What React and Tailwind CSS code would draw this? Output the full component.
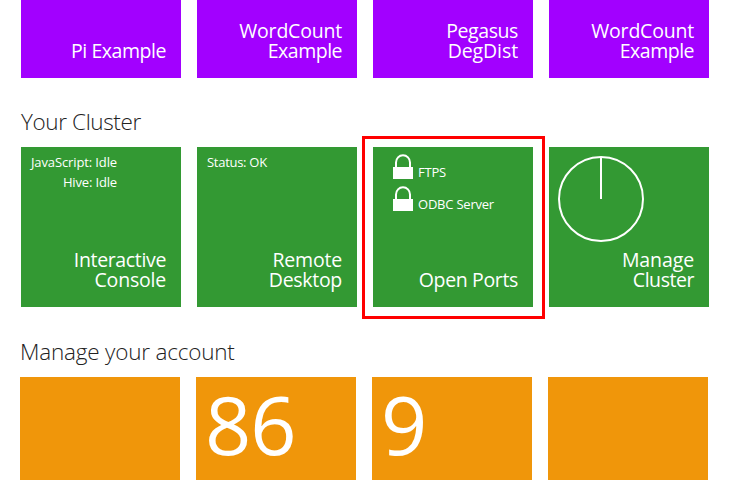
const titleFont = "font-['Open_Sans','Noto_Sans',sans-serif]";

function Label({ lines }) {
  return (
    <div className="flex flex-col items-end text-[19.5px] leading-5">
      {lines.map(([text, tracking]) => (
        <span key={text} className={tracking}>{text}</span>
      ))}
    </div>
  );
}

function Tile({ color, height, lines, children }) {
  return (
    <div className={`flex w-40 shrink-0 flex-col justify-between text-white ${color} ${height}`}>
      <div>{children}</div>
      {lines && (
        <div className="pr-[15px] pb-[17px]">
          <Label lines={lines} />
        </div>
      )}
    </div>
  );
}

function Port({ name, tracking }) {
  return (
    <div className="flex h-8 gap-[5px] text-[13px] leading-5">
      <svg width="20" height="26" viewBox="0 0 20 26" fill="none">
        <path d="M3 14V8.5a7 7.2 0 0 1 14 0V14" stroke="white" strokeWidth="2" />
        <path d="M0 13h20v12H0z" fill="white" />
      </svg>
      <span className={`pt-2 ${tracking}`}>{name}</span>
    </div>
  );
}

const purple = "bg-[#a200ff]";
const green = "bg-[#339933]";
const orange = "bg-[#f0960a]";
const wordCount = [["WordCount", "tracking-[-0.2px]"], ["Example", "tracking-[-0.5px]"]];

export default function App() {
  return (
    <div className={`relative h-[480px] w-[729px] overflow-hidden bg-white ${titleFont}`}>
      <section className="flex gap-4 pl-[21px]">
        <Tile color={purple} height="h-[78px]" lines={[["Pi Example", "tracking-[-0.45px]"]]} />
        <Tile color={purple} height="h-[78px]" lines={wordCount} />
        <Tile color={purple} height="h-[78px]" lines={[["Pegasus", "tracking-[-0.4px]"], ["DegDist", "tracking-[-0.1px]"]]} />
        <Tile color={purple} height="h-[78px]" lines={wordCount} />
      </section>

      <section className="pl-[21px]">
        <h2 className="h-[69px] pt-[29px] text-[22.5px] leading-[30px] font-light tracking-[-0.38px] text-[#222]">Your Cluster</h2>
        <div className="flex gap-4">
          <Tile color={green} height="h-40" lines={[["Interactive", "tracking-[-0.35px]"], ["Console", "tracking-[-0.2px]"]]}>
            <div className="flex w-24 flex-col items-end pt-[5px] text-[13px] leading-5">
              <span className="tracking-[-0.12px]">JavaScript: Idle</span>
              <span className="tracking-[-0.15px]">Hive: Idle</span>
            </div>
          </Tile>
          <Tile color={green} height="h-40" lines={[["Remote", "tracking-[-0.2px]"], ["Desktop", "tracking-[-0.3px]"]]}>
            <p className="pt-[5px] pl-[10px] text-[13px] leading-5 tracking-[-0.28px]">Status: OK</p>
          </Tile>
          <Tile color={green} height="h-40" lines={[["Open Ports", "tracking-[-0.35px]"]]}>
            <div className="pt-[7px] pl-5">
              <Port name="FTPS" tracking="tracking-[-0.2px]" />
              <Port name="ODBC Server" tracking="tracking-[-0.22px]" />
            </div>
          </Tile>
          <Tile color={green} height="h-40" lines={[["Manage", "tracking-[-0.1px]"], ["Cluster", "tracking-[-0.45px]"]]}>
            <svg className="mt-[9px] ml-[9px]" width="86" height="86" viewBox="0 0 86 86" fill="none" stroke="white" strokeWidth="2">
              <circle cx="43" cy="43" r="42" />
              <path d="M43 1v42" />
            </svg>
          </Tile>
        </div>
      </section>

      <section className="pl-5">
        <h2 className="h-[70px] pt-[30px] text-[22.5px] leading-[30px] font-light tracking-[-0.2px] text-[#222]">Manage your account</h2>
        <div className="flex gap-4">
          <Tile color={orange} height="h-[103px]" />
          <Tile color={orange} height="h-[103px]">
            <p className="pt-[2px] pl-[9px] text-[81px] leading-[90px] tracking-[-1px]">86</p>
          </Tile>
          <Tile color={orange} height="h-[103px]">
            <p className="pt-[2px] pl-[9px] text-[81px] leading-[90px]">9</p>
          </Tile>
          <Tile color={orange} height="h-[103px]" />
        </div>
      </section>

      <div className="absolute top-[136px] left-[362px] h-[183px] w-[183px] border-3 border-[#ff0000]" />
    </div>
  );
}
